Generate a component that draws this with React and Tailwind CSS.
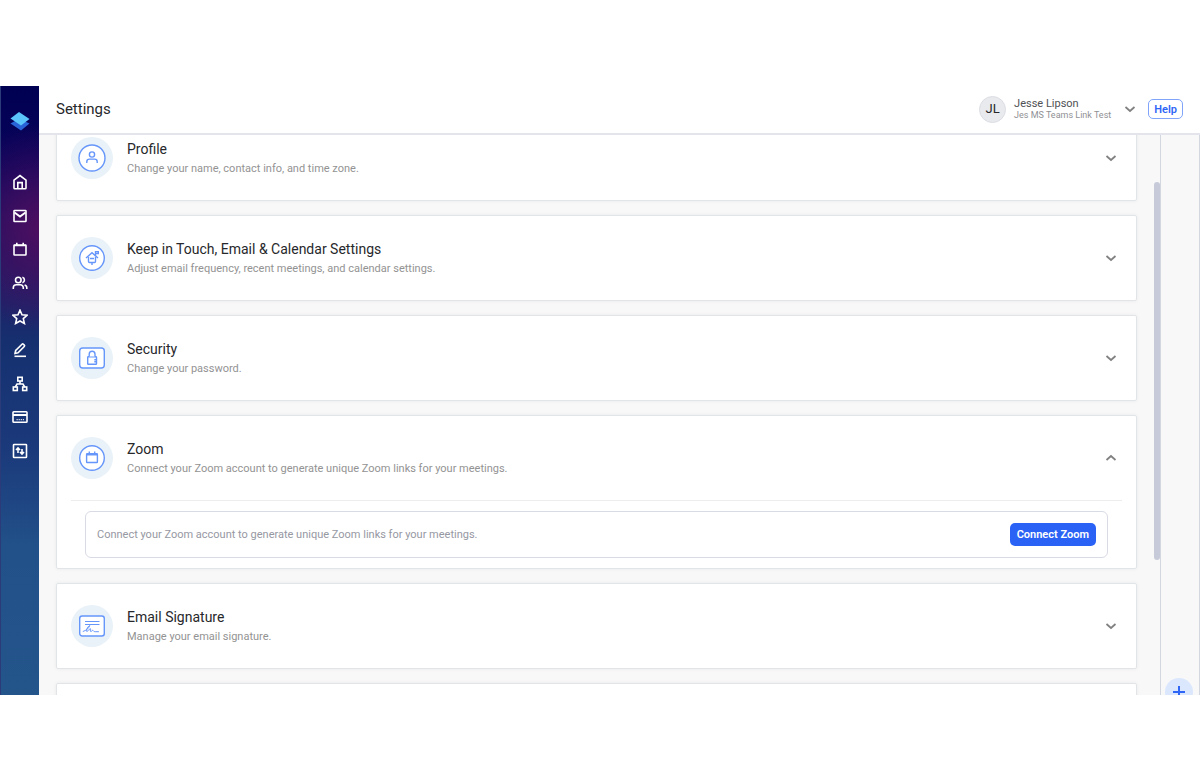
import React from "react";
import clsx from "clsx";

const ICONS = {
  home: (
    <>
      <path d="M2 6.2 8 1.5l6 4.7V14a.8.8 0 0 1-.8.8H2.8A.8.8 0 0 1 2 14Z" />
      <path d="M5.8 14.5V8.6h4.4v5.9" />
    </>
  ),
  mail: (
    <>
      <rect x="2" y="2.5" width="12" height="11" rx=".6" />
      <path d="m2.5 4.5 5.5 4 5.5-4" strokeWidth="2" />
    </>
  ),
  calendar: (
    <>
      <rect x="2" y="4" width="12" height="10" rx=".6" />
      <path d="M2 4.5h12M4.8 1.8V4M11.2 1.8V4" />
    </>
  ),
  people: (
    <>
      <circle cx="6.3" cy="5" r="2.8" />
      <path d="M1.3 14v-1.2a3 3 0 0 1 3-3h4a3 3 0 0 1 3 3V14M10.4 2.3a2.8 2.8 0 0 1 0 5.4M12.6 9.9a3 3 0 0 1 2.2 2.9V14" />
    </>
  ),
  star: <path d="m8 1.2 2 4.6 5 .5-3.7 3.3 1.1 4.9L8 12l-4.400 2.500 1.100-4.900L1 6.300l5-.5Z" />,
  pen: (
    <>
      <path d="m3 11.5.7-3L10 2.2a1 1 0 0 1 1.4 0l.9.9a1 1 0 0 1 0 1.4L6 10.8Z" />
      <path d="M2.5 14.3H14" />
    </>
  ),
  tree: (
    <>
      <rect x="5.8" y="1.3" width="4.4" height="3.7" />
      <rect x="1.3" y="11" width="4" height="3.5" />
      <rect x="10.7" y="11" width="4" height="3.5" />
      <path d="M8 5v3M3.3 11 5 8h6l1.7 3" />
    </>
  ),
  card: (
    <>
      <rect x="1" y="2.8" width="14" height="10.4" rx=".8" />
      <path d="M1 6h14" strokeWidth="2" />
      <path d="M4.5 10.7H12" strokeWidth="1" strokeDasharray="1.3 .8" />
    </>
  ),
  transfer: (
    <>
      <rect x="1.5" y="1.5" width="13" height="13" rx=".6" />
      <path d="M6 10V5.5M4 7l2-2 2 2M10 6v4.500M8 9l2 2 2-2" />
    </>
  ),
};

const NAV = [
  ["home", "Home"],
  ["mail", "Mail"],
  ["calendar", "Calendar"],
  ["people", "Contacts"],
  ["star", "Favorites"],
  ["pen", "Notes"],
  ["tree", "Network"],
  ["card", "Billing"],
  ["transfer", "Import"],
];

const SECTION_ICONS = {
  profile: (
    <>
      <circle cx="14" cy="14" r="13" />
      <circle cx="14" cy="10.5" r="2.6" />
      <path d="M8.8 19v-1.3a2.6 2.6 0 0 1 2.6-2.6h5.2a2.6 2.6 0 0 1 2.6 2.6V19" />
    </>
  ),
  mailbox: (
    <>
      <circle cx="14" cy="14" r="12.3" />
      <path d="m8 14 6-5.2 6 5.2" />
      <path d="M10.5 12.5v5a1 1 0 0 0 1 1h5a1 1 0 0 0 1-1v-5M12 14.5h4M14 18.500V21M17.500 12V7.800h2.800v1.800h-2.500" />
    </>
  ),
  lock: (
    <>
      <rect x="1.7" y="4" width="24.6" height="20" rx="3" />
      <rect x="9.7" y="12.7" width="8.8" height="7.6" rx=".6" />
      <path d="M11.2 12.5v-2.300a2.900 2.900 0 0 1 5.800 0v2.300" />
      <path d="M16.3 15.8h2.2M16.3 17.8h2.2" />
    </>
  ),
  zoom: (
    <>
      <circle cx="14" cy="14" r="12.3" />
      <rect x="8.6" y="9.8" width="10.8" height="8.7" rx=".6" />
      <path d="M8.8 10.6h10.4" strokeWidth="1.8" />
      <path d="M11.3 7.5V10M16.7 7.5V10" />
    </>
  ),
  signature: (
    <>
      <rect x="1.7" y="4" width="24.6" height="20" rx="2.5" />
      <g strokeWidth="1" fill="none">
        <path d="M7 9.5h14.5M7 12.5h14.5" />
        <path d="M4.800 19.500c3.200-.8 6.200-3.500 7-6-2.500 1.200-3.700 4.500-3 6 .8.500 2.200-2.800 3.700-2.800.6.300-.8 2.300.2 2.800 1.300.2 1.200-1.400 2-1.200.6.200 1 1.500 2.500 1.400h3.700" />
      </g>
    </>
  ),
};

const SECTIONS = [
  { id: "profile", title: "Profile", text: "Change your name, contact info, and time zone." },
  { id: "mailbox", title: "Keep in Touch, Email & Calendar Settings", text: "Adjust email frequency, recent meetings, and calendar settings." },
  { id: "lock", title: "Security", text: "Change your password." },
  { id: "zoom", title: "Zoom", text: "Connect your Zoom account to generate unique Zoom links for your meetings.", open: true },
  { id: "signature", title: "Email Signature", text: "Manage your email signature." },
];

function Chevron({ up, className }) {
  return (
    <svg viewBox="0 0 12 12" className={clsx("size-3 shrink-0 fill-none stroke-[#808080] stroke-[1.7]", up && "rotate-180", className)}>
      <path d="m1.5 4 4.5 4 4.5-4" />
    </svg>
  );
}

function Sidebar() {
  return (
    <nav className="flex w-[39px] shrink-0 flex-col items-center border-l border-[#2b3a78] bg-[radial-gradient(circle_105px_at_120%_142px,#520e60,transparent),linear-gradient(180deg,#000052_0%,#08055c_14%,#1c2068_34%,#16306f_42%,#1b3a7b_60%,#225189_76%,#23548a_100%)] pt-[25px] pr-px">
      <a href="#" aria-label="Dashboard">
        <svg viewBox="0 0 20 20" className="size-5">
          <path d="M.5 12.5 5 10h9l5.500 2.500-8.500 7Z" fill="#2863d8" />
          <path d="m.5 7.500 8.500-6.500 10.500 7-8.500 6.500Z" fill="#5ac4fb" />
        </svg>
      </a>
      <div className="mt-[43px] flex h-[285px] flex-col justify-between">
        {NAV.map(([id, label]) => (
          <a key={id} href="#" aria-label={label}>
            <svg viewBox="0 0 16 16" className="size-4 fill-none stroke-white stroke-[1.6]">{ICONS[id]}</svg>
          </a>
        ))}
      </div>
    </nav>
  );
}

function Header() {
  return (
    <header className="flex h-[49px] shrink-0 items-center border-b-2 border-[#e4e5ec] bg-white pr-[17px] pb-px pl-[17px]">
      <h1 className="text-[15px] leading-5 text-[#27282b]">Settings</h1>
      <button type="button" className="ml-auto flex items-center text-left">
        <span className="flex size-[27px] items-center justify-center rounded-full border border-[#dcdde4] bg-[#e9eaed] text-[13px] text-[#27282b]">JL</span>
        <span className="ml-2 flex flex-col">
          <span className="text-[11px] leading-3 text-[#505154]">Jesse Lipson</span>
          <span className="text-[9px] leading-[11px] text-[#909194]">Jes MS Teams Link Test</span>
        </span>
        <Chevron className="ml-[13px]" />
      </button>
      <button type="button" className="ml-3 h-5 rounded-[5px] border border-[#7fa4fa] px-[5px] text-[11px] leading-none font-semibold text-[#2f66f6]">Help</button>
    </header>
  );
}

function Section({ id, title, text, open }) {
  return (
    <section className="rounded-[2px] border border-[#e2e5e8] bg-white px-[14px] shadow-[0_0_4px_rgba(0,0,0,0.06)]">
      <button type="button" aria-expanded={!!open} className="flex h-[84px] w-full items-center pr-[5px] text-left">
        <span className="flex size-[42px] shrink-0 items-center justify-center rounded-full bg-[#e9f2f8]">
          <svg viewBox="0 0 28 28" className="size-7 fill-white stroke-[#6696fa] stroke-[1.4]">{SECTION_ICONS[id]}</svg>
        </span>
        <span className="ml-[14px] flex flex-1 flex-col pt-0.5">
          <span className="text-[14px] leading-5 text-[#27282b]">{title}</span>
          <span className="text-[11px] leading-5 text-[#939393]">{text}</span>
        </span>
        <Chevron up={open} />
      </button>
      {open && (
        <div className="border-t border-[#ededee] px-[14px] py-[10px]">
          <div className="flex items-center justify-between rounded-md border border-[#d9dbe4] px-[11px] py-[11px]">
            <p className="text-[11px] leading-5 text-[#9698a2]">{text}</p>
            <button type="button" className="h-[23px] rounded-[5px] bg-[#2962f5] px-[7px] text-[11px] leading-none font-semibold text-white">Connect Zoom</button>
          </div>
        </div>
      )}
    </section>
  );
}

export default function App() {
  return (
    <div className="h-screen bg-white pt-[86px] pb-[85px] font-['Roboto','Liberation_Sans',sans-serif]">
      <div className="flex h-full overflow-hidden">
        <Sidebar />
        <div className="flex min-w-0 flex-1 flex-col">
          <Header />
          <div className="flex min-h-0 flex-1 bg-[#f8f8f8]">
            <main className="min-w-0 flex-1 overflow-hidden px-[17px]">
              <div className="-mt-5 flex flex-col gap-[14px]">
                {SECTIONS.map(section => (
                  <Section key={section.id} {...section} />
                ))}
                <section className="h-[86px] rounded-[2px] border border-[#e2e5e8] bg-white shadow-[0_0_4px_rgba(0,0,0,0.06)]" />
              </div>
            </main>
            {/* Scroll thumb */}
            <div className="w-[6px] shrink-0 pt-[47px]">
              <div className="h-[378px] rounded-full bg-[#c7cbd9]" />
            </div>
            <aside className="flex w-10 shrink-0 items-end justify-center overflow-hidden border-x border-[#d3d7df] pr-0.5">
              <button type="button" aria-label="Add" className="-mb-[11px] flex size-7 shrink-0 items-center justify-center rounded-full bg-[#dbe7fd]">
                <svg viewBox="0 0 14 14" className="size-[14px] stroke-[#2f66f6] stroke-2">
                  <path d="M7 1v12M1 7h12" />
                </svg>
              </button>
            </aside>
          </div>
        </div>
      </div>
    </div>
  );
}
